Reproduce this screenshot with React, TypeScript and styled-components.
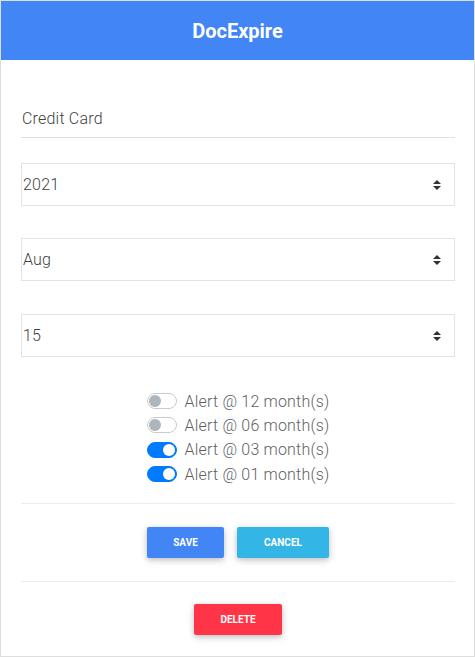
import React, { useState } from "react";
import styled, { createGlobalStyle } from "styled-components";

const GlobalStyle = createGlobalStyle`
  body {
    margin: 0;
    font-family: Roboto, "Liberation Sans", sans-serif;
    background: #fff;
  }
`;

const Card = styled.div`
  width: 475px;
  height: 657px;
  box-sizing: border-box;
  border: 1px solid #dedede;
  display: flex;
  flex-direction: column;
`;

const Header = styled.header`
  height: 59px;
  background: #4285f4;
  color: #fff;
  display: flex;
  align-items: center;
  justify-content: center;
  font-size: 20px;
  font-weight: 700;
`;

const Body = styled.div`
  padding: 0 19px 0 20px;
  display: flex;
  flex-direction: column;
`;

const TextInput = styled.input`
  margin-top: 40px;
  height: 37px;
  border: none;
  border-bottom: 1px solid #e0e0e0;
  padding: 0 0 0 1px;
  font-family: inherit;
  font-size: 16px;
  font-weight: 300;
  letter-spacing: 0.2px;
  color: #3f3f3f;
  outline: none;
  background: transparent;
`;

const SelectWrap = styled.div<{ $top: number }>`
  position: relative;
  margin-top: ${({ $top }) => $top}px;
`;

const Select = styled.select`
  width: 100%;
  height: 43px;
  appearance: none;
  border: 1px solid #e3e3e3;
  border-radius: 0;
  background: #fff;
  padding: 0 0 0 1px;
  font-family: inherit;
  font-size: 16px;
  font-weight: 300;
  letter-spacing: 0.2px;
  color: #3f3f3f;
  outline: none;
`;

const Arrow = styled.svg`
  position: absolute;
  right: 14px;
  top: 17px;
  pointer-events: none;
`;

const Alerts = styled.div`
  margin-top: 32px;
  display: flex;
  flex-direction: column;
  align-items: center;
`;

const AlertRow = styled.label`
  display: flex;
  align-items: center;
  height: 24.3px;
  font-size: 16px;
  font-weight: 300;
  letter-spacing: 0.2px;
  color: #5f5f5f;
  cursor: pointer;
`;

const Track = styled.span<{ $on: boolean }>`
  position: relative;
  width: 28px;
  height: 14px;
  margin-right: 8px;
  border-radius: 8px;
  border: 1px solid ${({ $on }) => ($on ? "#007bff" : "#c7ccd1")};
  background: ${({ $on }) => ($on ? "#007bff" : "#fff")};

  &::after {
    content: "";
    position: absolute;
    top: 1px;
    left: ${({ $on }) => ($on ? "15px" : "1px")};
    width: 12px;
    height: 12px;
    border-radius: 50%;
    background: ${({ $on }) => ($on ? "#fff" : "#adb5bd")};
  }
`;

const Divider = styled.hr<{ $top: number }>`
  width: 100%;
  margin: ${({ $top }) => $top}px 0 0;
  border: none;
  border-top: 1px solid #ececec;
`;

const ButtonRow = styled.div<{ $top: number }>`
  margin-top: ${({ $top }) => $top}px;
  display: flex;
  justify-content: center;
  gap: 13px;
`;

const Button = styled.button<{ $color: string; $w: number }>`
  width: ${({ $w }) => $w}px;
  height: 31px;
  border: none;
  border-radius: 2px;
  background: ${({ $color }) => $color};
  color: #fff;
  font-family: inherit;
  font-size: 10px;
  font-weight: 700;
  text-transform: uppercase;
  box-shadow: 0 2px 5px rgba(0, 0, 0, 0.16), 0 2px 10px rgba(0, 0, 0, 0.12);
  cursor: pointer;
`;

const alertsInit = [
  { label: "Alert @ 12 month(s)", on: false },
  { label: "Alert @ 06 month(s)", on: false },
  { label: "Alert @ 03 month(s)", on: true },
  { label: "Alert @ 01 month(s)", on: true },
];

const months = ["Jan", "Feb", "Mar", "Apr", "May", "Jun", "Jul", "Aug", "Sep", "Oct", "Nov", "Dec"];

function SelectBox({ top, value, options }: { top: number; value: string; options: string[] }) {
  return (
    <SelectWrap $top={top}>
      <Select defaultValue={value}>
        {options.map((o) => (
          <option key={o}>{o}</option>
        ))}
      </Select>
      <Arrow width="8" height="10" viewBox="0 0 8 10">
        <path d="M4 0 L8 4 L0 4 Z M0 6 L8 6 L4 10 Z" fill="#333" />
      </Arrow>
    </SelectWrap>
  );
}

export default function App() {
  const [alerts, setAlerts] = useState(alertsInit);

  const toggle = (idx: number) =>
    setAlerts((a) => a.map((x, i) => (i === idx ? { ...x, on: !x.on } : x)));

  return (
    <>
      <GlobalStyle />
      <Card>
        <Header>DocExpire</Header>
        <Body>
          <TextInput defaultValue="Credit Card" />
          <SelectBox top={25} value="2021" options={["2019", "2020", "2021", "2022", "2023"]} />
          <SelectBox top={32} value="Aug" options={months} />
          <SelectBox top={33} value="15" options={Array.from({ length: 31 }, (_, i) => String(i + 1))} />
          <Alerts>
            {alerts.map((a, idx) => (
              <AlertRow key={a.label} onClick={() => toggle(idx)}>
                <Track $on={a.on} />
                {a.label}
              </AlertRow>
            ))}
          </Alerts>
          <Divider $top={17} />
          <ButtonRow $top={23}>
            <Button $color="#4285f4" $w={77}>Save</Button>
            <Button $color="#33b5e5" $w={92}>Cancel</Button>
          </ButtonRow>
          <Divider $top={23} />
          <ButtonRow $top={22}>
            <Button $color="#ff3547" $w={88}>Delete</Button>
          </ButtonRow>
        </Body>
      </Card>
    </>
  );
}
